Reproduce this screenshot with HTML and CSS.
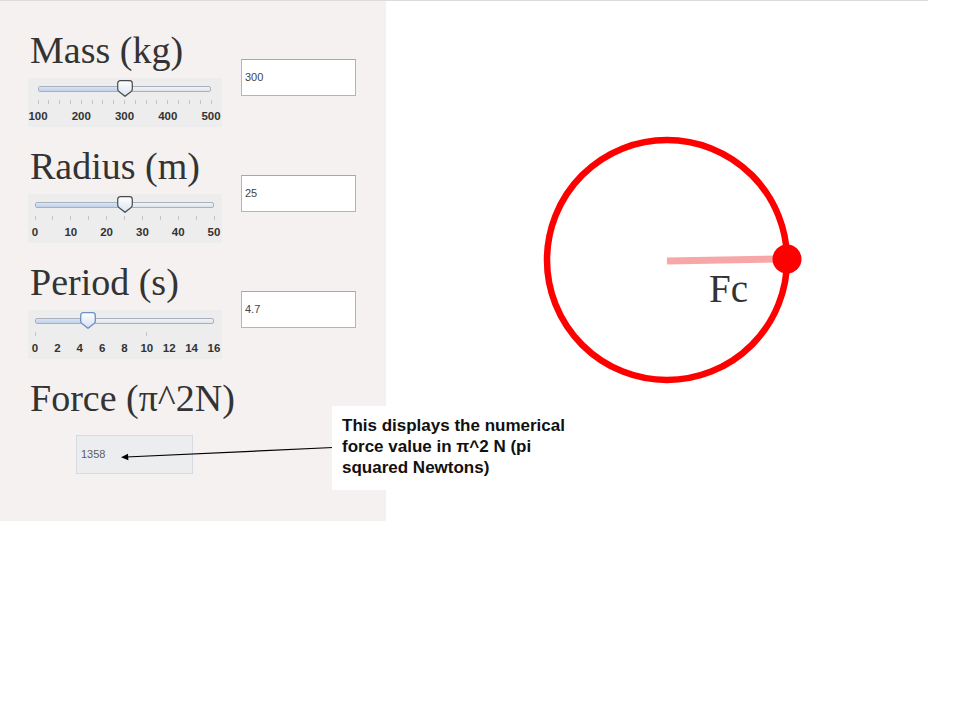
FILE: index.html
```html
<!DOCTYPE html>
<html lang="en">
<head>
<meta charset="utf-8">
<title>Centripetal Force</title>
<link rel="stylesheet" href="styles.css">
</head>
<body>
<div class="page">
  <div class="panel">
    <div class="section">
      <div class="control">
        <div class="label">Mass (kg)</div>
        <div class="slider slider--mass">
          <div class="track">
            <div class="fill" style="width:50%"></div>
            <div class="thumb" style="left:50%"><svg width="16" height="17" viewBox="0 0 16 17"><defs><linearGradient id="tg1" x1="0" y1="0" x2="0" y2="1"><stop offset="0" stop-color="#ffffff"/><stop offset="1" stop-color="#d7e3f3"/></linearGradient></defs><path d="M3.5 0.7 H12.5 Q15.3 0.7 15.3 3.5 V9 Q15.3 10.5 13.8 11.8 L8 16.3 L2.2 11.8 Q0.7 10.5 0.7 9 V3.5 Q0.7 0.7 3.5 0.7 Z" fill="url(#tg1)" stroke="#4a4a4a" stroke-width="1.2"/></svg></div>
          </div>
          <div class="scale">
            <i style="left:0%"></i><i style="left:6.25%"></i><i style="left:12.5%"></i><i style="left:18.75%"></i><i style="left:25%"></i><i style="left:31.25%"></i><i style="left:37.5%"></i><i style="left:43.75%"></i><i style="left:50%"></i><i style="left:56.25%"></i><i style="left:62.5%"></i><i style="left:68.75%"></i><i style="left:75%"></i><i style="left:81.25%"></i><i style="left:87.5%"></i><i style="left:93.75%"></i><i style="left:100%"></i>
            <span style="left:0%">100</span><span style="left:25%">200</span><span style="left:50%">300</span><span style="left:75%">400</span><span style="left:100%">500</span>
          </div>
        </div>
      </div>
      <div class="field">300</div>
    </div>

    <div class="section">
      <div class="control">
        <div class="label">Radius (m)</div>
        <div class="slider">
          <div class="track">
            <div class="fill" style="width:50%"></div>
            <div class="thumb" style="left:50%"><svg width="16" height="17" viewBox="0 0 16 17"><defs><linearGradient id="tg2" x1="0" y1="0" x2="0" y2="1"><stop offset="0" stop-color="#ffffff"/><stop offset="1" stop-color="#d7e3f3"/></linearGradient></defs><path d="M3.5 0.7 H12.5 Q15.3 0.7 15.3 3.5 V9 Q15.3 10.5 13.8 11.8 L8 16.3 L2.2 11.8 Q0.7 10.5 0.7 9 V3.5 Q0.7 0.7 3.5 0.7 Z" fill="url(#tg2)" stroke="#4a4a4a" stroke-width="1.2"/></svg></div>
          </div>
          <div class="scale">
            <i style="left:0%"></i><i style="left:10%"></i><i style="left:20%"></i><i style="left:30%"></i><i style="left:40%"></i><i style="left:50%"></i><i style="left:60%"></i><i style="left:70%"></i><i style="left:80%"></i><i style="left:90%"></i><i style="left:100%"></i>
            <span style="left:0%">0</span><span style="left:20%">10</span><span style="left:40%">20</span><span style="left:60%">30</span><span style="left:80%">40</span><span style="left:100%">50</span>
          </div>
        </div>
      </div>
      <div class="field">25</div>
    </div>

    <div class="section">
      <div class="control">
        <div class="label">Period (s)</div>
        <div class="slider">
          <div class="track">
            <div class="fill" style="width:29.4%"></div>
            <div class="thumb" style="left:29.4%"><svg width="16" height="17" viewBox="0 0 16 17"><defs><linearGradient id="tg3" x1="0" y1="0" x2="0" y2="1"><stop offset="0" stop-color="#ffffff"/><stop offset="1" stop-color="#d2e0f2"/></linearGradient></defs><path d="M3.5 0.7 H12.5 Q15.3 0.7 15.3 3.5 V9 Q15.3 10.5 13.8 11.8 L8 16.3 L2.2 11.8 Q0.7 10.5 0.7 9 V3.5 Q0.7 0.7 3.5 0.7 Z" fill="url(#tg3)" stroke="#6e8fbf" stroke-width="1.3"/></svg></div>
          </div>
          <div class="scale">
            <i style="left:0%"></i><i style="left:62.5%"></i>
            <span style="left:0%">0</span><span style="left:12.5%">2</span><span style="left:25%">4</span><span style="left:37.5%">6</span><span style="left:50%">8</span><span style="left:62.5%">10</span><span style="left:75%">12</span><span style="left:87.5%">14</span><span style="left:100%">16</span>
          </div>
        </div>
      </div>
      <div class="field">4.7</div>
    </div>

    <div class="section section--force">
      <div class="label">Force (π^2N)</div>
      <div class="readout">1358</div>
    </div>
  </div>

  <svg class="stage" width="542" height="520" viewBox="386 1 542 520">
    <circle cx="667" cy="260" r="120" fill="none" stroke="#ff0000" stroke-width="6.5"/>
    <line x1="667" y1="261" x2="778" y2="259" stroke="#f7a7a7" stroke-width="7"/>
    <circle cx="787" cy="259" r="14.5" fill="#ff0000"/>
    <text x="709" y="302" class="fc">Fc</text>
  </svg>

  <svg class="arrow" width="400" height="520" viewBox="0 0 400 520">
    <line x1="333" y1="446.5" x2="126" y2="456" stroke="#000" stroke-width="1.2"/>
    <path d="M121 456.2 L128 452.8 L128.4 459.3 Z" fill="#000"/>
  </svg>

  <div class="note">This displays the numerical<br>force value in π^2 N (pi<br>squared Newtons)</div>
</div>
</body>
</html>
```

FILE: styles.css
```css
html, body {
  margin: 0;
  padding: 0;
  background: #ffffff;
}

.page {
  position: relative;
  display: flex;
  width: 928px;
  border-top: 1px solid #dcdcdc;
}

.panel {
  width: 386px;
  height: 520px;
  box-sizing: border-box;
  background: #f4f1f0;
  padding: 27px 0 0 28px;
  display: flex;
  flex-direction: column;
  gap: 17px;
}

.section {
  display: flex;
  align-items: flex-start;
}

.control {
  width: 194px;
  display: flex;
  flex-direction: column;
  gap: 6px;
}

.label {
  font-family: "Liberation Serif", "Times New Roman", serif;
  font-size: 38px;
  line-height: 44px;
  height: 44px;
  color: #333333;
  padding-left: 2px;
  white-space: nowrap;
}

.slider {
  height: 49px;
  background: #ededed;
  box-sizing: border-box;
  padding: 8px 8px 0 7px;
}

.slider--mass {
  padding: 8px 11px 0 10px;
}

.track {
  position: relative;
  height: 6px;
  box-sizing: border-box;
  border: 1px solid #a9b1bd;
  border-radius: 2px;
  background: linear-gradient(#f1f3f6, #dfe4ea);
}

.fill {
  height: 100%;
  background: linear-gradient(#dae5f4, #bfd1ea);
}

.thumb {
  position: absolute;
  top: -7px;
  width: 16px;
  height: 17px;
  margin-left: -8px;
}

.thumb svg {
  display: block;
}

.scale {
  position: relative;
  height: 30px;
  margin-top: 8px;
}

.scale i {
  position: absolute;
  top: 0;
  width: 1px;
  height: 4px;
  margin-left: -0.5px;
  background: #c4c4c4;
}

.scale span {
  position: absolute;
  top: 9px;
  transform: translateX(-50%);
  font-family: "Liberation Sans", Arial, sans-serif;
  font-weight: bold;
  font-size: 11.5px;
  line-height: 14px;
  color: #333333;
}

.field {
  margin: 31px 0 0 19px;
  width: 115px;
  height: 37px;
  box-sizing: border-box;
  background: #ffffff;
  border: 1px solid #b4b4b4;
  border-top-color: #a8a8a8;
  padding-left: 3px;
  font-family: "Liberation Sans", Arial, sans-serif;
  font-size: 11px;
  line-height: 35px;
  color: #444444;
}

.section--force {
  flex-direction: column;
}

.readout {
  margin: 15px 0 0 48px;
  width: 117px;
  height: 39px;
  box-sizing: border-box;
  background: #ecedee;
  border: 1px solid #d6dbe2;
  padding-left: 4px;
  font-family: "Liberation Sans", Arial, sans-serif;
  font-size: 11px;
  line-height: 37px;
  color: #5e5e5e;
}

.stage {
  display: block;
}

.fc {
  font-family: "Liberation Serif", "Times New Roman", serif;
  font-size: 39px;
  fill: #333333;
}

.arrow {
  position: absolute;
  left: 0;
  top: 0;
  pointer-events: none;
}

.note {
  position: absolute;
  left: 332px;
  top: 405px;
  width: 248px;
  height: 84px;
  box-sizing: border-box;
  background: #ffffff;
  padding: 9px 0 0 10px;
  font-family: "Liberation Sans", Arial, sans-serif;
  font-weight: bold;
  font-size: 17px;
  line-height: 21px;
  color: #111111;
  white-space: nowrap;
}
```
